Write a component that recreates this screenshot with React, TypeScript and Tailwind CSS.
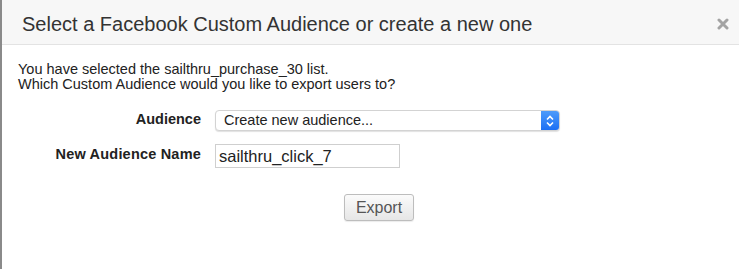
import React from "react";

export default function App() {
  return (
    <div
      className="w-[739px] h-[269px] bg-white border-l-2 border-[#8a8a8a] overflow-hidden"
      style={{ fontFamily: '"Liberation Sans", Arial, sans-serif' }}
    >
      <div className="h-[45px] bg-[#f7f7f7] border-b border-[#e3e3e3] flex items-start justify-between pl-[20px] pr-[10px]">
        <div className="pt-[13px] text-[20px] leading-[23px] text-[#333]">
          Select a Facebook Custom Audience or create a new one
        </div>
        <div className="pt-[18px]">
          <svg width="12" height="12" viewBox="0 0 12 12">
            <path d="M2 2 L10 10 M10 2 L2 10" stroke="#a3a3a3" strokeWidth="3" strokeLinecap="round" />
          </svg>
        </div>
      </div>
      <div className="pt-[17px] pl-[16px]">
        <div className="text-[14.5px] leading-[15px] text-[#222]">
          <div>You have selected the sailthru_purchase_30 list.</div>
          <div>Which Custom Audience would you like to export users to?</div>
        </div>
        <div className="flex flex-col mt-[18px]">
          <div className="flex items-center gap-[14px] h-[21px]">
            <div className="w-[183px] text-right font-bold text-[14.5px] leading-[17px] text-[#222] pb-[3px]">Audience</div>
            <div className="w-[345px] h-[21px] flex rounded-[4px] border border-[#d3d3d3] shadow-[0_1px_1px_rgba(0,0,0,0.12)] bg-white overflow-hidden">
              <div className="flex-1 pl-[8px] text-[14.5px] leading-[19px] text-[#222]">Create new audience...</div>
              <div className="w-[18px] h-full bg-gradient-to-b from-[#4d9bfa] to-[#1b6ff4] flex items-center justify-center">
                <svg width="10" height="14" viewBox="0 0 10 14">
                  <path d="M2 5.5 L5 2.5 L8 5.5 M2 8.5 L5 11.5 L8 8.5" stroke="#fff" strokeWidth="1.6" fill="none" />
                </svg>
              </div>
            </div>
          </div>
          <div className="flex items-center gap-[14px] h-[24px] mt-[13px]">
            <div className="w-[183px] text-right font-bold text-[14.5px] leading-[17px] text-[#222] pb-[3px] tracking-[0.2px]">New Audience Name</div>
            <div className="w-[185px] h-[24px] border border-[#cfcfcf] bg-white pl-[3px] text-[16.5px] leading-[22px] text-[#222]">
              sailthru_click_7
            </div>
          </div>
          <div className="mt-[26px] pl-[326px]">
            <div className="w-[70px] h-[27px] rounded-[3px] border border-[#bdbdbd] bg-gradient-to-b from-[#fbfbfb] to-[#e6e6e6] flex items-center justify-center text-[16px] text-[#555] shadow-[0_1px_1px_rgba(0,0,0,0.08)]">
              Export
            </div>
          </div>
        </div>
      </div>
    </div>
  );
}
